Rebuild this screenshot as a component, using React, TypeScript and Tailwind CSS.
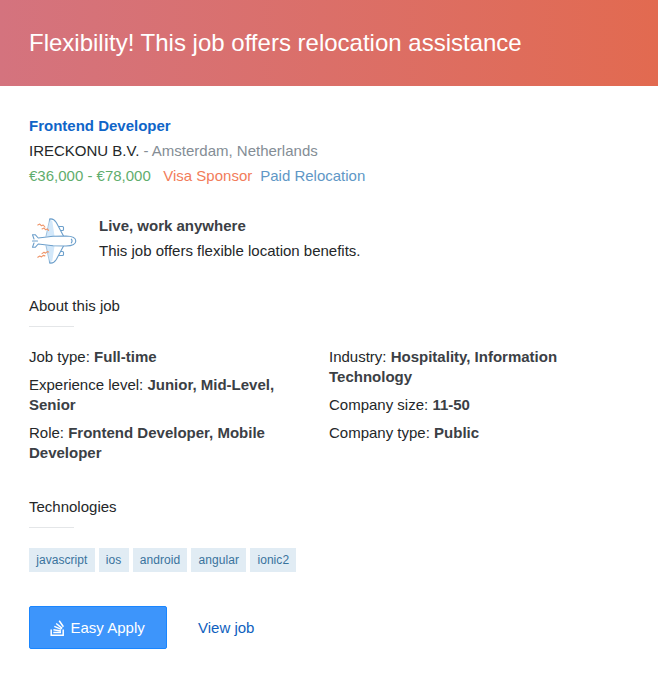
import type { ReactNode } from "react";

const tags = ["javascript", "ios", "android", "angular", "ionic2"];

function Fact({ label, children }: { label: string; children: ReactNode }) {
  return (
    <p>
      {label}: <strong className="font-bold text-[#3b4045]">{children}</strong>
    </p>
  );
}

function Heading({ children }: { children: ReactNode }) {
  return (
    <div>
      <h2 className="leading-5">{children}</h2>
      <div className="mt-[10px] h-px w-[45px] bg-[#e4e6e8]" />
    </div>
  );
}

function Plane() {
  return (
    <svg className="h-[60px] w-[60px] shrink-0" viewBox="0 0 60 60" fill="none" strokeLinejoin="round" strokeLinecap="round">
      <g stroke="#6c9fcb" strokeWidth="1.1">
        <path d="M35 16.500h3.500q1 0 1 1v2q0 1-1 1h-2M35 45.500h3.500q1 0 1-1v-2q0-1-1-1h-2" />
        <path fill="#fff" d="M29 26.300L25.700 9q3.800-.8 6.600 3.500L39.500 26M29 35.700L25.700 53q3.800.8 6.600-3.500L39.500 36" />
      </g>
      <path fill="#d3e8fa" d="M22 26.200L26.200 10l2.100 1L30.500 26zM22 35.800L26.200 52l2.100-1L30.500 36z" />
      <g stroke="#6c9fcb" strokeWidth="1.1">
        <path d="M22 26.200L25.700 9M22 35.800L25.700 53" strokeWidth=".6" />
        <path fill="#fff" d="M14.200 28L29 26.300 42 26c6.500.1 9.800 2 9.800 5s-3.300 4.900-9.800 5l-13-.3L14.200 34l-3 3.300H8.500L10 33M10 29l-1.500-4.300h2.700l3 3.300" />
        <path d="M8.500 31h5M47.300 29.200q1.600 1.800 0 3.600" />
      </g>
      <path stroke="#ee9468" strokeWidth="1.1" d="M13.800 15l2-.9 1.700 1.700 1.700-.8 1.700 2M18 18.900l2-.8 1.500 1.600 1.800-.8 1.300 1.400M18 43.600l2-1.300 1.500.9 1.800-1.600 1.300.5M13.800 47.200l2-1.200 1.700.9 1.700-1.500 1.700.5" />
    </svg>
  );
}

function StackLogo() {
  return (
    <svg className="h-[18px] w-[15px] shrink-0" viewBox="0 0 15 18" fill="none" stroke="#fff" strokeWidth="1.5">
      <path d="M1.200 10.500v5.700h12v-5.700M3.300 13.600h7.700M3.400 10.700l7.600 1.300M4.300 7.400l7 3M6.200 4.500l6 4.800M9.200 1.800l4.200 6" />
    </svg>
  );
}

export default function App() {
  return (
    <div className="min-h-[677px] w-full bg-white font-['Liberation_Sans',Arial,sans-serif] text-[15px] leading-5 text-[#242729]">
      <header className="flex h-[86px] items-center bg-linear-to-r from-[#d4737e] to-[#e26a50] px-[29px] text-white">
        <h1 className="text-[24px] leading-[30px]">Flexibility! This job offers relocation assistance</h1>
      </header>

      <main className="px-[29px]">
        <section className="pt-[27px] leading-[25px]">
          <h2 className="font-bold text-[#0f65c8]">Frontend Developer</h2>
          <p>
            IRECKONU B.V. <span className="text-[#848d95]">- Amsterdam, Netherlands</span>
          </p>
          <p className="flex">
            <span className="text-[#5fad6d]">€36,000 - €78,000</span>
            <span className="ml-[12.500px] text-[#f27c5a]">Visa Sponsor</span>
            <span className="ml-[8px] text-[#6097c6]">Paid Relocation</span>
          </p>
        </section>

        <section className="-ml-[5px] mt-[22px] flex">
          <Plane />
          <div className="ml-[15px] pt-[3px] leading-[25px]">
            <h3 className="font-bold text-[#3b4045]">Live, work anywhere</h3>
            <p>This job offers flexible location benefits.</p>
          </div>
        </section>

        <section className="mt-[26px]">
          <Heading>About this job</Heading>
          <div className="mt-5 grid grid-cols-[300px_260px]">
            <div className="w-[260px] space-y-2">
              <Fact label="Job type">Full-time</Fact>
              <Fact label="Experience level">Junior, Mid-Level, Senior</Fact>
              <Fact label="Role">Frontend Developer, Mobile Developer</Fact>
            </div>
            <div className="space-y-2">
              <Fact label="Industry">Hospitality, Information Technology</Fact>
              <Fact label="Company size">11-50</Fact>
              <Fact label="Company type">Public</Fact>
            </div>
          </div>
        </section>

        <section className="mt-[34px]">
          <Heading>Technologies</Heading>
          <ul className="mt-5 flex gap-1">
            {tags.map((tag) => (
              <li key={tag} className="h-6 bg-[#e1ecf4] px-[7.200px] text-[12px] leading-6 tracking-[0.06px] text-[#39739d]">
                {tag}
              </li>
            ))}
          </ul>
        </section>

        <section className="mt-[34px] flex items-center">
          <button className="flex h-[43px] w-[138px] items-center rounded-[2px] border border-[#1a86ff] bg-[#3d95fb] pl-[19.500px] text-white">
            <StackLogo />
            <span className="ml-[6px]">Easy Apply</span>
          </button>
          <a className="ml-[31px] text-[#0f5fbe]">View job</a>
        </section>
      </main>
    </div>
  );
}
